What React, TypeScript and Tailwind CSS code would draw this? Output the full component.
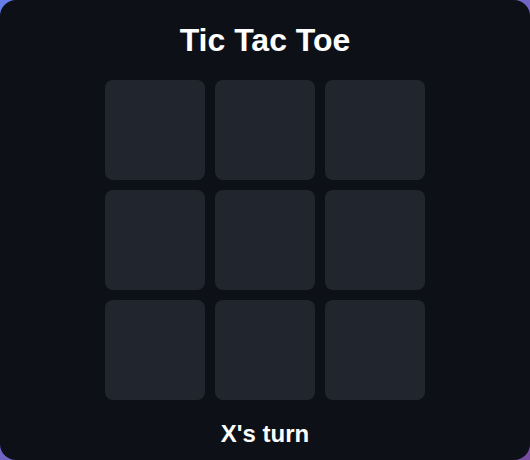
import React, { useState } from 'react';

type Cell = 'X' | 'O' | null;

export default function App() {
  const [cells, setCells] = useState<Cell[]>(Array(9).fill(null));
  const [xNext, setXNext] = useState(true);

  const play = (i: number) => {
    if (cells[i]) return;
    const next = cells.slice();
    next[i] = xNext ? 'X' : 'O';
    setCells(next);
    setXNext(!xNext);
  };

  return (
    <div className="w-[530px] h-[460px] bg-gradient-to-br from-[#667eea] to-[#764ba2]">
      <div
        className="w-full h-full rounded-2xl bg-[#0d1117] flex flex-col items-center text-white"
        style={{ fontFamily: '"Liberation Sans", Arial, sans-serif' }}
      >
        {/* Title */}
        <h1 className="mt-[21px] text-[32px] leading-[38px] font-bold">Tic Tac Toe</h1>

        {/* Board */}
        <div className="mt-[21px] grid grid-cols-[repeat(3,100px)] gap-[10px]">
          {cells.map((c, i) => (
            <button
              key={i}
              onClick={() => play(i)}
              className="w-[100px] h-[100px] rounded-lg bg-[#21252d] text-5xl font-bold text-white"
            >
              {c}
            </button>
          ))}
        </div>

        {/* Status */}
        <p className="mt-[20px] text-[24px] leading-[28px] font-bold">{xNext ? 'X' : 'O'}'s turn</p>
      </div>
    </div>
  );
}
